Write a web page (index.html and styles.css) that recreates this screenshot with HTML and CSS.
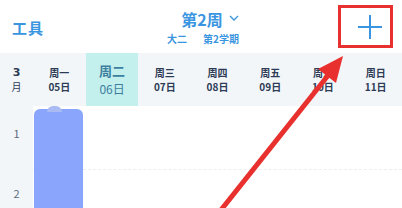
FILE: index.html
```html
<!DOCTYPE html>
<html lang="zh">
<head>
<meta charset="utf-8">
<link rel="stylesheet" href="styles.css">
</head>
<body>
<div class="app">
  <header class="topbar">
    <div class="tools">工具</div>
    <div class="title">
      <div class="week">第2周 <svg class="chev" width="10" height="6" viewBox="0 0 10 6"><path d="M1 1 L5 5 L9 1" fill="none" stroke="#3a95e0" stroke-width="1.3"/></svg></div>
      <div class="term">大二<span class="gap"></span>第2学期</div>
    </div>
    <div class="add">
      <svg width="24" height="24" viewBox="0 0 24 24"><path d="M12 0 V24 M0 12 H24" stroke="#3a95e0" stroke-width="2"/></svg>
    </div>
  </header>
  <div class="days">
    <div class="month"><b>3</b><span>月</span></div>
    <div class="day"><span>周一</span><span>05日</span></div>
    <div class="day today"><span>周二</span><span>06日</span></div>
    <div class="day"><span>周三</span><span>07日</span></div>
    <div class="day"><span>周四</span><span>08日</span></div>
    <div class="day"><span>周五</span><span>09日</span></div>
    <div class="day"><span>周六</span><span>10日</span></div>
    <div class="day"><span>周日</span><span>11日</span></div>
  </div>
  <div class="body">
    <div class="nums">
      <div class="num">1</div>
      <div class="num">2</div>
    </div>
    <div class="grid">
      <div class="row"></div>
      <div class="row"></div>
      <div class="course"><span class="bump"></span></div>
    </div>
  </div>
  <div class="redbox"></div>
  <svg class="arrow" width="402" height="208" viewBox="0 0 402 208">
    <line x1="221" y1="210" x2="330" y2="73" stroke="#e8312f" stroke-width="5"/>
    <polygon points="343,56 336,83 318,69" fill="#e8312f"/>
  </svg>
</div>
</body>
</html>
```
FILE: styles.css
```css
* { box-sizing: border-box; margin: 0; padding: 0; }
body { width: 402px; height: 208px; overflow: hidden; background: #fff; font-family: "Noto Sans CJK SC", "Noto Sans", sans-serif; }
.app { position: relative; width: 402px; height: 208px; overflow: hidden; }
.topbar { height: 53px; display: flex; align-items: center; justify-content: space-between; padding: 0 12px; color: #3a95e0; }
.tools { font-size: 15px; font-weight: 700; line-height: 18px; margin-top: 2px; letter-spacing: 1px; }
.title { display: flex; flex-direction: column; align-items: center; margin-left: 14px; }
.week { font-size: 16px; font-weight: 700; line-height: 23px; display: flex; align-items: center; gap: 6px; margin-left: 14px; }
.chev { margin-top: -2px; }
.term { font-size: 10px; font-weight: 700; line-height: 15px; }
.gap { display: inline-block; width: 16px; }
.add { width: 44px; height: 44px; display: flex; align-items: center; justify-content: center; margin-right: -2px; }
.days { height: 53px; display: flex; background: #f2f6f9; }
.month { width: 33px; display: flex; flex-direction: column; align-items: center; justify-content: center; color: #2d3b55; font-size: 10px; line-height: 14px; padding-top: 1px; }
.month b { font-size: 11px; font-family: "DejaVu Sans", sans-serif; }
.day { flex: 1; display: flex; flex-direction: column; align-items: center; justify-content: center; color: #2d3b55; font-size: 10px; font-weight: 700; line-height: 14px; padding-top: 1px; }
.day span { display: block; }
.day.today { background: #c3efed; color: #3c7f9e; font-size: 13px; line-height: 18px; font-weight: 700; }
.day.today span:last-child { font-weight: 400; font-size: 12px; }
.body { display: flex; height: 102px; }
.nums { width: 33px; background: #f3f6f9; display: flex; flex-direction: column; }
.num { height: 60px; flex: none; display: flex; align-items: center; justify-content: center; font-size: 11px; color: #5a6880; padding-bottom: 6px; }
.grid { flex: 1; position: relative; }
.row { height: 64px; border-bottom: 1px dashed #eceef0; }
.course { position: absolute; left: 1px; top: 3px; width: 49px; height: 110px; background: #8aa6fc; border-radius: 6px 6px 0 0; }
.bump { position: absolute; left: 13px; top: -3px; width: 15px; height: 6px; border-radius: 8px 8px 0 0; background: #a9bbf2; }
.redbox { position: absolute; left: 338px; top: 5px; width: 55px; height: 43px; border: 3px solid #e8312f; }
.arrow { position: absolute; left: 0; top: 0; }
```
